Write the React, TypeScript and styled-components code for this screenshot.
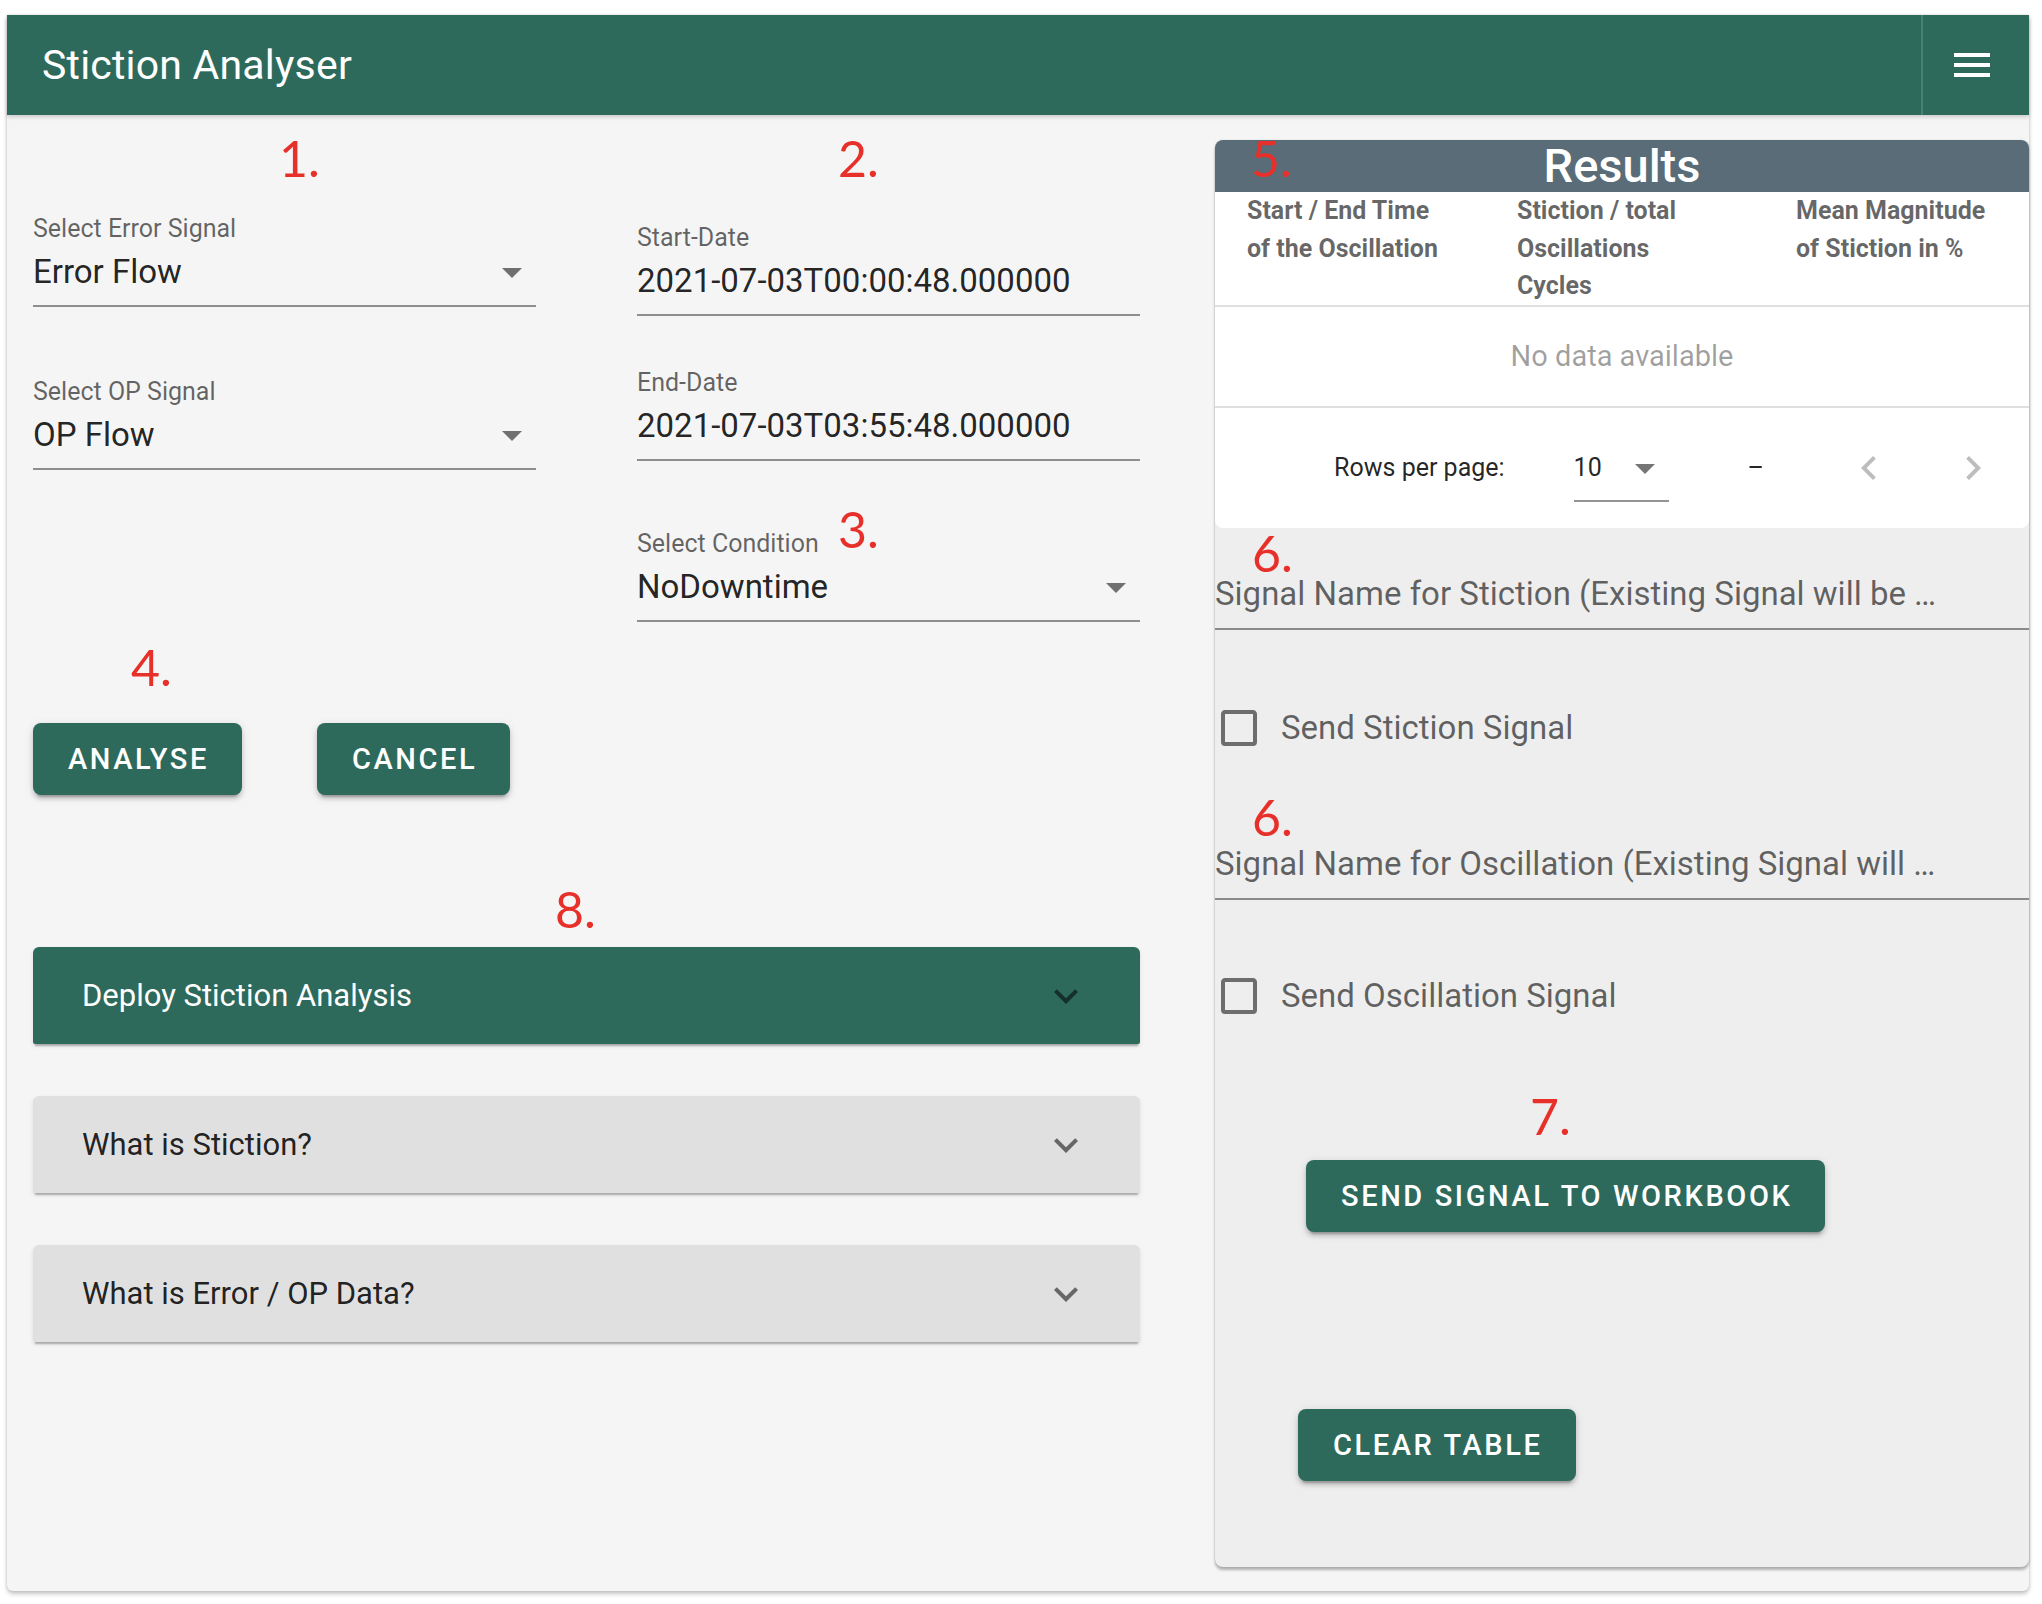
import styled, { createGlobalStyle } from 'styled-components';

const GREEN = '#2d6a5c';

const GlobalStyle = createGlobalStyle`
    body {
        margin: 0;
        background: #ffffff;
        font-family: Roboto, 'Noto Sans', sans-serif;
    }
    * {
        box-sizing: border-box;
    }
`;

const Page = styled.div`
    padding: 15px 14px 13px 7px;
`;

const Frame = styled.div`
    position: relative;
    width: 2022px;
    height: 1576px;
    display: flex;
    flex-direction: column;
    background: #f5f5f5;
    border-radius: 0 0 6px 6px;
    box-shadow: 0 3px 4px rgba(0, 0, 0, 0.22), 0 0 3px rgba(0, 0, 0, 0.12);
`;

const AppBar = styled.header`
    height: 100px;
    flex: none;
    display: flex;
    align-items: center;
    background: ${GREEN};
    color: #ffffff;
    box-shadow: 0 2px 4px rgba(0, 0, 0, 0.18);
    position: relative;
    z-index: 1;
`;

const Title = styled.h1`
    flex: 1;
    margin: 0 0 0 35px;
    font-size: 41px;
    font-weight: 400;
    letter-spacing: 0.2px;
`;

const MenuSlot = styled.div`
    width: 108px;
    height: 100%;
    display: flex;
    align-items: center;
    padding-left: 25px;
    border-left: 2px solid rgba(255, 255, 255, 0.14);
`;

const Body = styled.main`
    flex: 1;
    display: grid;
    grid-template-columns: 1107px 814px;
    column-gap: 75px;
    padding: 25px 0 0 26px;
    align-items: start;
`;

const LeftColumn = styled.section`
    display: flex;
    flex-direction: column;
`;

const FieldGrid = styled.div`
    display: grid;
    grid-template-columns: 503px 503px;
    column-gap: 101px;
    margin-top: 74px;
    align-items: start;
`;

const FieldStack = styled.div<{ $offset?: number }>`
    display: flex;
    flex-direction: column;
    padding-top: ${(p) => p.$offset ?? 0}px;
`;

const Field = styled.div<{ $mt?: number }>`
    margin-top: ${(p) => p.$mt ?? 0}px;
`;

const FieldLabel = styled.div`
    font-size: 25px;
    line-height: 30px;
    color: rgba(0, 0, 0, 0.6);
`;

const FieldControl = styled.div`
    margin-top: 8px;
    height: 55px;
    display: flex;
    align-items: flex-start;
    justify-content: space-between;
    border-bottom: 2px solid rgba(0, 0, 0, 0.42);
    font-size: 33px;
    line-height: 40px;
    color: rgba(0, 0, 0, 0.87);
`;

const DropIcon = styled.svg`
    width: 48px;
    height: 48px;
    margin: -4px 0 0 0;
    fill: rgba(0, 0, 0, 0.54);
    flex: none;
`;

const ButtonRow = styled.div`
    display: flex;
    gap: 75px;
    margin-top: 101px;
`;

const ActionButton = styled.button<{ $ml?: number; $mt?: number }>`
    align-self: flex-start;
    height: 72px;
    padding: 0 33px 0 35px;
    margin-left: ${(p) => p.$ml ?? 0}px;
    margin-top: ${(p) => p.$mt ?? 0}px;
    border: none;
    border-radius: 8px;
    background: ${GREEN};
    color: #ffffff;
    font-family: Roboto, sans-serif;
    font-size: 29px;
    font-weight: 500;
    letter-spacing: 2.6px;
    text-transform: uppercase;
    box-shadow: 0 6px 2px -4px rgba(0, 0, 0, 0.2), 0 4px 4px 0 rgba(0, 0, 0, 0.14), 0 2px 10px 0 rgba(0, 0, 0, 0.12);
`;

const PanelList = styled.div`
    display: flex;
    flex-direction: column;
    gap: 52px;
    margin-top: 152px;
`;

const PanelHeader = styled.div<{ $active?: boolean }>`
    height: 97px;
    display: flex;
    align-items: center;
    justify-content: space-between;
    padding: 0 50px 0 49px;
    background: ${(p) => (p.$active ? GREEN : '#e0e0e0')};
    color: ${(p) => (p.$active ? '#ffffff' : 'rgba(0, 0, 0, 0.87)')};
    font-size: 31px;
    border-radius: 6px 6px 2px 2px;
    box-shadow: 0 4px 2px -2px rgba(0, 0, 0, 0.25), 0 2px 4px rgba(0, 0, 0, 0.1);
`;

const ChevronIcon = styled.svg`
    width: 48px;
    height: 48px;
    fill: rgba(0, 0, 0, 0.54);
`;

const ResultsPanel = styled.aside`
    height: 1427px;
    display: flex;
    flex-direction: column;
    background: #eeeeee;
    border-radius: 8px;
    box-shadow: 0 3px 3px rgba(0, 0, 0, 0.28), 0 0 2px rgba(0, 0, 0, 0.14);
`;

const ResultsBar = styled.div`
    height: 52px;
    background: #596c77;
    border-radius: 8px 8px 0 0;
    color: #ffffff;
    font-size: 47px;
    font-weight: 500;
    line-height: 52px;
    text-align: center;
`;

const Table = styled.div`
    background: #ffffff;
    border-radius: 0 0 8px 8px;
`;

const HeadRow = styled.div`
    display: grid;
    grid-template-columns: 270px 279px 1fr;
    border-bottom: 2px solid rgba(0, 0, 0, 0.12);
`;

const HeadCell = styled.div`
    padding: 0 32px;
    font-size: 25px;
    line-height: 37.5px;
    font-weight: 700;
    color: rgba(0, 0, 0, 0.6);
    white-space: nowrap;
`;

const EmptyRow = styled.div`
    height: 101px;
    display: flex;
    align-items: center;
    justify-content: center;
    border-bottom: 2px solid rgba(0, 0, 0, 0.12);
    font-size: 29px;
    color: rgba(0, 0, 0, 0.38);
`;

const Footer = styled.div`
    height: 120px;
    display: flex;
    align-items: center;
    justify-content: flex-end;
    padding-right: 20px;
    font-size: 25px;
    color: rgba(0, 0, 0, 0.87);
`;

const RowsLabel = styled.span`
    margin-right: 69px;
`;

const RowsSelect = styled.div`
    width: 95px;
    display: flex;
    align-items: center;
    justify-content: space-between;
    padding: 10px 0 8px;
    border-bottom: 2px solid rgba(0, 0, 0, 0.42);
`;

const PageText = styled.span`
    margin-left: 79px;
`;

const PageButton = styled.div<{ $ml: number }>`
    width: 72px;
    height: 72px;
    margin-left: ${(p) => p.$ml}px;
    display: flex;
    align-items: center;
    justify-content: center;
`;

const PageIcon = styled.svg`
    width: 48px;
    height: 48px;
    fill: rgba(0, 0, 0, 0.26);
`;

const SignalField = styled.div<{ $mt: number }>`
    margin-top: ${(p) => p.$mt}px;
    padding-bottom: 14px;
    border-bottom: 2px solid rgba(0, 0, 0, 0.42);
`;

const SignalLabel = styled.div`
    max-width: 93%;
    font-size: 33px;
    line-height: 40px;
    color: rgba(0, 0, 0, 0.6);
    white-space: nowrap;
    overflow: hidden;
`;

const CheckRow = styled.label<{ $mt: number }>`
    margin-top: ${(p) => p.$mt}px;
    display: flex;
    align-items: center;
    gap: 18px;
    font-size: 33px;
    color: rgba(0, 0, 0, 0.6);
`;

const CheckIcon = styled.svg`
    width: 48px;
    height: 48px;
    fill: rgba(0, 0, 0, 0.54);
`;

const Annotation = styled.span<{ $x: number; $y: number }>`
    position: absolute;
    left: ${(p) => p.$x}px;
    top: ${(p) => p.$y}px;
    font-family: Lato, 'Liberation Sans', sans-serif;
    font-size: 50px;
    line-height: 50px;
    color: #e8302a;
    z-index: 2;
`;

const MENU = 'M3,6H21V8H3V6M3,11H21V13H3V11M3,16H21V18H3V16Z';
const MENU_DOWN = 'M7,10L12,15L17,10H7Z';
const CHEVRON_DOWN = 'M7.41,8.58L12,13.17L16.59,8.58L18,10L12,16L6,10L7.41,8.58Z';
const CHEVRON_LEFT = 'M15.41,16.58L10.83,12L15.41,7.41L14,6L8,12L14,18L15.41,16.58Z';
const CHEVRON_RIGHT = 'M8.59,16.58L13.17,12L8.59,7.41L10,6L16,12L10,18L8.59,16.58Z';
const CHECKBOX =
    'M19,3H5C3.89,3 3,3.89 3,5V19A2,2 0 0,0 5,21H19A2,2 0 0,0 21,19V5C21,3.89 20.1,3 19,3M19,5V19H5V5H19Z';

const SelectField = ({ label, value, mt }: { label: string; value: string; mt?: number }) => (
    <Field $mt={mt}>
        <FieldLabel>{label}</FieldLabel>
        <FieldControl>
            <span>{value}</span>
            <DropIcon viewBox="0 0 24 24">
                <path d={MENU_DOWN} />
            </DropIcon>
        </FieldControl>
    </Field>
);

const DateField = ({ label, value, mt }: { label: string; value: string; mt?: number }) => (
    <Field $mt={mt}>
        <FieldLabel>{label}</FieldLabel>
        <FieldControl>
            <span>{value}</span>
        </FieldControl>
    </Field>
);

const Panel = ({ title, active }: { title: string; active?: boolean }) => (
    <PanelHeader $active={active}>
        <span>{title}</span>
        <ChevronIcon viewBox="0 0 24 24">
            <path d={CHEVRON_DOWN} />
        </ChevronIcon>
    </PanelHeader>
);

const Check = ({ label, mt }: { label: string; mt: number }) => (
    <CheckRow $mt={mt}>
        <CheckIcon viewBox="0 0 24 24">
            <path d={CHECKBOX} />
        </CheckIcon>
        {label}
    </CheckRow>
);

const App = () => {
    return (
        <Page>
            <GlobalStyle />
            <Frame>
                <AppBar>
                    <Title>Stiction Analyser</Title>
                    <MenuSlot>
                        <svg width="48" height="48" viewBox="0 0 24 24" fill="#ffffff">
                            <path d={MENU} />
                        </svg>
                    </MenuSlot>
                </AppBar>

                <Body>
                    <LeftColumn>
                        <FieldGrid>
                            <FieldStack>
                                <SelectField label="Select Error Signal" value="Error Flow" />
                                <SelectField label="Select OP Signal" value="OP Flow" mt={70} />
                            </FieldStack>
                            <FieldStack $offset={9}>
                                <DateField label="Start-Date" value="2021-07-03T00:00:48.000000" />
                                <DateField label="End-Date" value="2021-07-03T03:55:48.000000" mt={52} />
                                <SelectField label="Select Condition" value="NoDowntime" mt={68} />
                            </FieldStack>
                        </FieldGrid>

                        <ButtonRow>
                            <ActionButton>Analyse</ActionButton>
                            <ActionButton>Cancel</ActionButton>
                        </ButtonRow>

                        <PanelList>
                            <Panel title="Deploy Stiction Analysis" active />
                            <Panel title="What is Stiction?" />
                            <Panel title="What is Error / OP Data?" />
                        </PanelList>
                    </LeftColumn>

                    <ResultsPanel>
                        <ResultsBar>Results</ResultsBar>
                        <Table>
                            <HeadRow>
                                <HeadCell>
                                    Start / End Time
                                    <br />
                                    of the Oscillation
                                </HeadCell>
                                <HeadCell>
                                    Stiction / total
                                    <br />
                                    Oscillations
                                    <br />
                                    Cycles
                                </HeadCell>
                                <HeadCell>
                                    Mean Magnitude
                                    <br />
                                    of Stiction in %
                                </HeadCell>
                            </HeadRow>
                            <EmptyRow>No data available</EmptyRow>
                            <Footer>
                                <RowsLabel>Rows per page:</RowsLabel>
                                <RowsSelect>
                                    <span>10</span>
                                    <DropIcon viewBox="0 0 24 24" style={{ margin: 0 }}>
                                        <path d={MENU_DOWN} />
                                    </DropIcon>
                                </RowsSelect>
                                <PageText>–</PageText>
                                <PageButton $ml={69}>
                                    <PageIcon viewBox="0 0 24 24">
                                        <path d={CHEVRON_LEFT} />
                                    </PageIcon>
                                </PageButton>
                                <PageButton $ml={32}>
                                    <PageIcon viewBox="0 0 24 24">
                                        <path d={CHEVRON_RIGHT} />
                                    </PageIcon>
                                </PageButton>
                            </Footer>
                        </Table>

                        <SignalField $mt={46}>
                            <SignalLabel>Signal Name for Stiction (Existing Signal will be …</SignalLabel>
                        </SignalField>
                        <Check label="Send Stiction Signal" mt={74} />

                        <SignalField $mt={92}>
                            <SignalLabel>Signal Name for Oscillation (Existing Signal will …</SignalLabel>
                        </SignalField>
                        <Check label="Send Oscillation Signal" mt={72} />

                        <ActionButton $ml={91} $mt={140}>
                            Send Signal to Workbook
                        </ActionButton>
                        <ActionButton $ml={83} $mt={177}>
                            Clear Table
                        </ActionButton>
                    </ResultsPanel>
                </Body>

                <Annotation $x={272} $y={118}>1.</Annotation>
                <Annotation $x={831} $y={118}>2.</Annotation>
                <Annotation $x={831} $y={489}>3.</Annotation>
                <Annotation $x={124} $y={627}>4.</Annotation>
                <Annotation $x={1244} $y={118}>5.</Annotation>
                <Annotation $x={1245} $y={513}>6.</Annotation>
                <Annotation $x={1245} $y={777}>6.</Annotation>
                <Annotation $x={1523} $y={1076}>7.</Annotation>
                <Annotation $x={548} $y={869}>8.</Annotation>
            </Frame>
        </Page>
    );
};

export default App;
